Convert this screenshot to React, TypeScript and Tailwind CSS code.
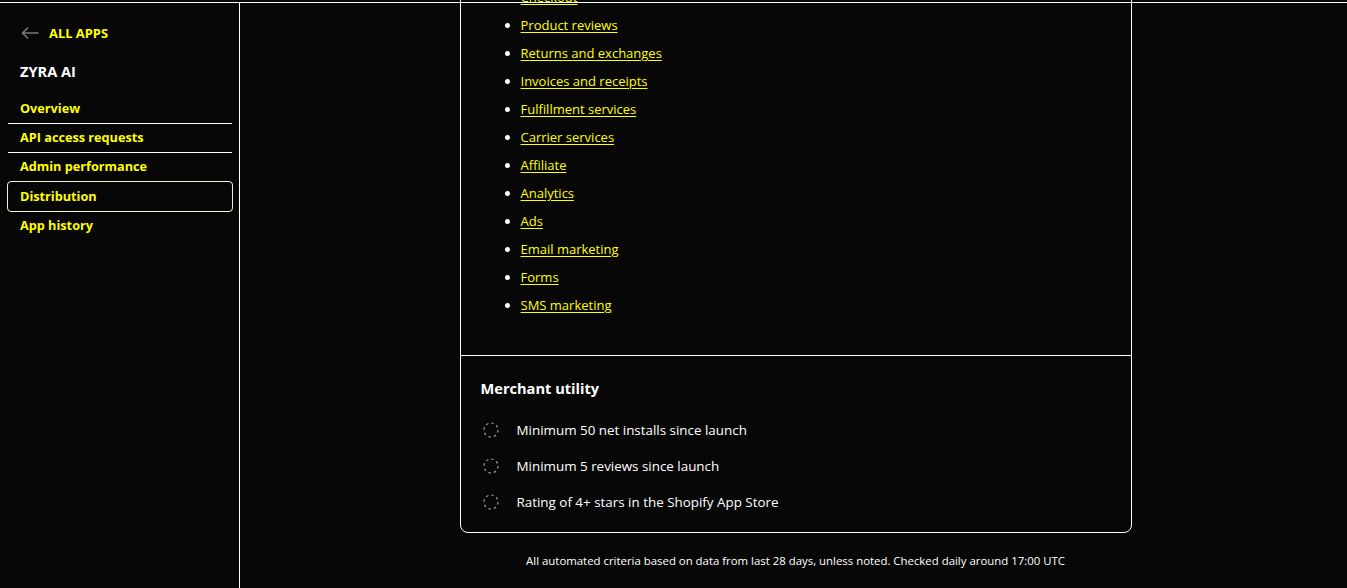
import React from "react";

const links = [
  "Checkout",
  "Product reviews",
  "Returns and exchanges",
  "Invoices and receipts",
  "Fulfillment services",
  "Carrier services",
  "Affiliate",
  "Analytics",
  "Ads",
  "Email marketing",
  "Forms",
  "SMS marketing",
];

const criteria = [
  "Minimum 50 net installs since launch",
  "Minimum 5 reviews since launch",
  "Rating of 4+ stars in the Shopify App Store",
];

function DashedCircle() {
  return (
    <svg width="16" height="16" viewBox="0 0 16 16" className="shrink-0">
      <circle cx="8" cy="8" r="7" fill="none" stroke="#9a9a9a" strokeWidth="1.2" strokeDasharray="2.6 2.9" />
    </svg>
  );
}

function BackArrow() {
  return (
    <svg width="18" height="12" viewBox="0 0 18 12" className="shrink-0">
      <path d="M17 6H1.5M6.5 1L1.5 6l5 5" fill="none" stroke="#7a7a7a" strokeWidth="1.6" strokeLinecap="round" strokeLinejoin="round" />
    </svg>
  );
}

export default function App() {
  return (
    <div
      className="h-[588px] w-full overflow-hidden bg-[#070707] text-white"
      style={{ fontFamily: '"Open Sans", "Noto Sans", sans-serif' }}
    >
      <div className="h-[2px]" />
      <div className="flex h-[586px] border-t border-white">
        <aside className="w-[240px] shrink-0 border-r border-white">
          <div className="flex items-center gap-[10px] pl-[21px] pt-[19px] h-[22px] box-content">
            <BackArrow />
            <span className="text-[12.9px] font-bold text-[#ffff00] leading-none">ALL APPS</span>
          </div>
          <div className="pl-[20px] mt-[17px] text-[14.6px] font-bold leading-[20px]">ZYRA AI</div>
          <nav className="ml-[8px] w-[224px] mt-[14px] flex flex-col text-[12.7px] font-bold text-[#ffff00]">
            <div className="h-[29px] flex items-center pl-[12px] border-b border-white">Overview</div>
            <div className="h-[29px] flex items-center pl-[12px] border-b border-white">API access requests</div>
            <div className="h-[28px] flex items-center pl-[12px]">Admin performance</div>
            <div className="h-[31px] -mx-px flex items-center pl-[12px] border border-[#f4f4d8] rounded-[4px]">Distribution</div>
            <div className="h-[28px] flex items-center pl-[12px]">App history</div>
          </nav>
        </aside>
        <main className="flex-1 flex flex-col items-center pl-[4px]">
          <div className="w-[672px] mt-[-40px] border border-white rounded-[8px]">
            <ul className="pt-[19px] pb-[36px] pl-[60px] list-disc text-[13px] marker:text-white">
              {links.map((l) => (
                <li key={l} className="h-[28px] leading-[28px]">
                  <a className="text-[#ffff00] underline underline-offset-[2px]">{l}</a>
                </li>
              ))}
            </ul>
            <div className="border-t border-white px-[20px] pt-[22px] pb-[20px]">
              <div className="text-[14.6px] font-bold leading-[20px]">Merchant utility</div>
              <div className="mt-[22px] flex flex-col gap-[16px]">
                {criteria.map((c) => (
                  <div key={c} className="h-[20px] flex items-center gap-[18px] pl-[2px] text-[13.4px]">
                    <DashedCircle />
                    <span>{c}</span>
                  </div>
                ))}
              </div>
            </div>
          </div>
          <p className="mt-[20px] text-[11.4px] leading-[16px]">
            All automated criteria based on data from last 28 days, unless noted. Checked daily around 17:00 UTC
          </p>
        </main>
      </div>
    </div>
  );
}
